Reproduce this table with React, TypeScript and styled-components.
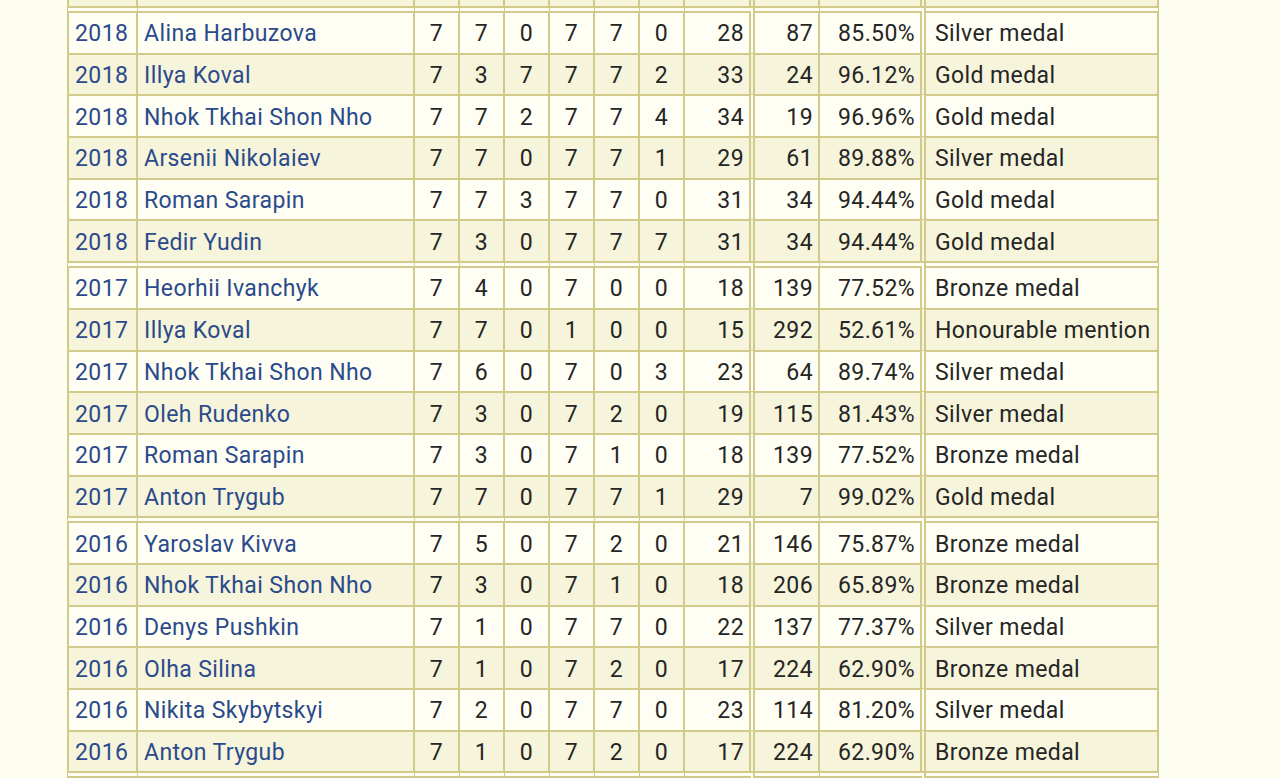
import styled, { createGlobalStyle } from "styled-components";

type Row = [string, string, number[], number, number, string, string];

const GROUPS: Row[][] = [
    [
        ["2018", "Alina Harbuzova", [7, 7, 0, 7, 7, 0], 28, 87, "85.50%", "Silver medal"],
        ["2018", "Illya Koval", [7, 3, 7, 7, 7, 2], 33, 24, "96.12%", "Gold medal"],
        ["2018", "Nhok Tkhai Shon Nho", [7, 7, 2, 7, 7, 4], 34, 19, "96.96%", "Gold medal"],
        ["2018", "Arsenii Nikolaiev", [7, 7, 0, 7, 7, 1], 29, 61, "89.88%", "Silver medal"],
        ["2018", "Roman Sarapin", [7, 7, 3, 7, 7, 0], 31, 34, "94.44%", "Gold medal"],
        ["2018", "Fedir Yudin", [7, 3, 0, 7, 7, 7], 31, 34, "94.44%", "Gold medal"],
    ],
    [
        ["2017", "Heorhii Ivanchyk", [7, 4, 0, 7, 0, 0], 18, 139, "77.52%", "Bronze medal"],
        ["2017", "Illya Koval", [7, 7, 0, 1, 0, 0], 15, 292, "52.61%", "Honourable mention"],
        ["2017", "Nhok Tkhai Shon Nho", [7, 6, 0, 7, 0, 3], 23, 64, "89.74%", "Silver medal"],
        ["2017", "Oleh Rudenko", [7, 3, 0, 7, 2, 0], 19, 115, "81.43%", "Silver medal"],
        ["2017", "Roman Sarapin", [7, 3, 0, 7, 1, 0], 18, 139, "77.52%", "Bronze medal"],
        ["2017", "Anton Trygub", [7, 7, 0, 7, 7, 1], 29, 7, "99.02%", "Gold medal"],
    ],
    [
        ["2016", "Yaroslav Kivva", [7, 5, 0, 7, 2, 0], 21, 146, "75.87%", "Bronze medal"],
        ["2016", "Nhok Tkhai Shon Nho", [7, 3, 0, 7, 1, 0], 18, 206, "65.89%", "Bronze medal"],
        ["2016", "Denys Pushkin", [7, 1, 0, 7, 7, 0], 22, 137, "77.37%", "Silver medal"],
        ["2016", "Olha Silina", [7, 1, 0, 7, 2, 0], 17, 224, "62.90%", "Bronze medal"],
        ["2016", "Nikita Skybytskyi", [7, 2, 0, 7, 7, 0], 23, 114, "81.20%", "Silver medal"],
        ["2016", "Anton Trygub", [7, 1, 0, 7, 2, 0], 17, 224, "62.90%", "Bronze medal"],
    ],
];

const COLORS = {
    page: "#fdfdf0",
    row: "#fefef4",
    shaded: "#f6f4da",
    line: "#d2ca8b",
    link: "#2b4a8b",
    text: "#252525",
};

const WIDTHS = [71, 277, 45, 45, 45, 45, 45, 45, 70, 65, 106, 233];

const GlobalStyle = createGlobalStyle`
    html, body {
        margin: 0;
        padding: 0;
        overflow: hidden;
        background: ${COLORS.page};
    }
    * {
        box-sizing: border-box;
    }
`;

const Page = styled.div`
    height: 778px;
    overflow: hidden;
    padding-left: 67px;
`;

const Table = styled.table`
    margin-top: -35.7px;
    width: 1092px;
    table-layout: fixed;
    border-collapse: separate;
    border-spacing: 0;
    font-family: Roboto, "Noto Sans", sans-serif;
    font-size: 23px;
    letter-spacing: 0.4px;
    color: ${COLORS.text};
`;

const Tr = styled.tr<{ $shaded: boolean }>`
    background: ${(p) => (p.$shaded ? COLORS.shaded : COLORS.row)};
`;

const Td = styled.td<{ $align?: "left" | "center" | "right"; $double?: boolean; $first?: boolean; $groupTop?: boolean; $wide?: boolean }>`
    height: ${(p) => (p.$groupTop ? "46.7px" : "41.7px")};
    padding: 2px ${(p) => (p.$align === "right" ? "5px" : "6px")} 0 ${(p) => (p.$wide ? "9px" : "6px")};
    text-align: ${(p) => p.$align || "left"};
    vertical-align: middle;
    white-space: nowrap;
    overflow: hidden;
    border-top: ${(p) => (p.$groupTop ? `7px double ${COLORS.line}` : `2px solid ${COLORS.line}`)};
    border-right: ${(p) => (p.$double ? `6px double ${COLORS.line}` : `2px solid ${COLORS.line}`)};
    border-left: ${(p) => (p.$first ? `2px solid ${COLORS.line}` : "none")};
`;

const PointCell = styled(Td)`
    padding: 2px 0 0;
`;

const Link = styled.span`
    color: ${COLORS.link};
`;

function ResultRow({ row, shaded, groupTop }: { row?: Row; shaded: boolean; groupTop: boolean }) {
    const points = row ? row[2] : [null, null, null, null, null, null];
    return (
        <Tr $shaded={shaded}>
            <Td $first $groupTop={groupTop}>
                {row && <Link>{row[0]}</Link>}
            </Td>
            <Td $groupTop={groupTop}>{row && <Link>{row[1]}</Link>}</Td>
            {points.map((p, i) => (
                <PointCell key={i} $align="center" $groupTop={groupTop}>
                    {p}
                </PointCell>
            ))}
            <Td $align="right" $double $groupTop={groupTop}>
                {row && row[3]}
            </Td>
            <Td $align="right" $groupTop={groupTop}>
                {row && row[4]}
            </Td>
            <Td $align="right" $double $groupTop={groupTop}>
                {row && row[5]}
            </Td>
            <Td $wide $groupTop={groupTop}>
                {row && row[6]}
            </Td>
        </Tr>
    );
}

export default function App() {
    return (
        <Page>
            <GlobalStyle />
            <Table>
                <colgroup>
                    {WIDTHS.map((w, i) => (
                        <col key={i} style={{ width: w }} />
                    ))}
                </colgroup>
                <tbody>
                    <ResultRow shaded groupTop={false} />
                </tbody>
                {GROUPS.map((group, gi) => (
                    <tbody key={gi}>
                        {group.map((row, ri) => (
                            <ResultRow key={ri} row={row} shaded={ri % 2 === 1} groupTop={ri === 0} />
                        ))}
                    </tbody>
                ))}
                <tbody>
                    <ResultRow shaded={false} groupTop />
                </tbody>
            </Table>
        </Page>
    );
}
